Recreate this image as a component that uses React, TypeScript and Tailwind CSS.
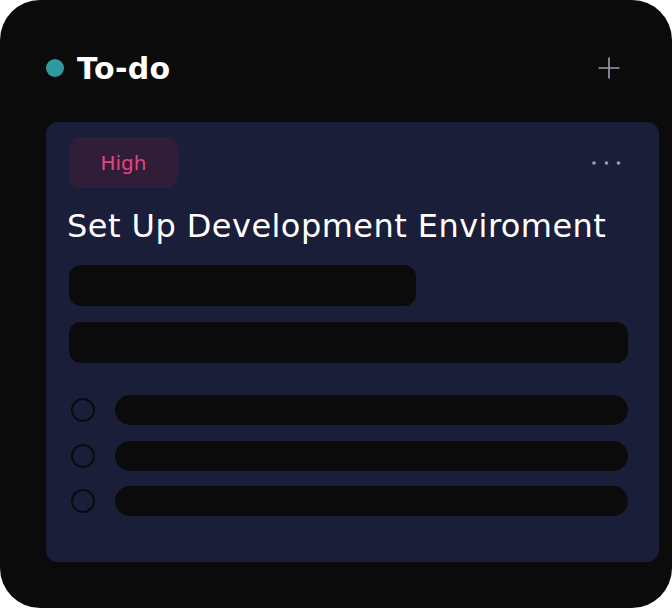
const checklist = [0, 1, 2];

function ChecklistRow() {
  return (
    <div className="flex items-center">
      <div className="ml-[2px] size-[24px] shrink-0 rounded-full border-2 border-[#0b0b0c]"/>
      <div className="ml-[20px] h-[30px] flex-1 rounded-full bg-[#0b0b0c]"/>
    </div>
  );
}

function Dots() {
  return (
    <svg width="32" height="8" viewBox="0 0 32 8" className="text-[#9d9dab]">
      <circle cx="4" cy="4" r="1.8" fill="currentColor"/>
      <circle cx="16.5" cy="4" r="1.8" fill="currentColor"/>
      <circle cx="28.5" cy="4" r="1.8" fill="currentColor"/>
    </svg>
  );
}

function PlusIcon() {
  return (
    <svg width="24" height="24" viewBox="0 0 24 24" fill="none" stroke="currentColor" strokeWidth="1.7">
      <path d="M1.5 12h21M12 1.5v21"/>
    </svg>
  );
}

export default function App() {
  return (
    <div className="w-[672px] h-[608px] bg-white" style={{fontFamily: '"DejaVu Sans", "Open Sans", sans-serif'}}>
      <div className="w-full h-full rounded-[40px] bg-[#0b0b0c] pl-[46px] pr-[13px] pt-[50px]">
        {/* Column header */}
        <div className="flex items-center h-9">
          <span className="size-[18px] rounded-full bg-[#2f9b9f]"/>
          <h2 className="ml-[13px] text-[30px] font-bold text-white tracking-[0.4px]">To-do</h2>
          <button className="ml-auto mr-[38px] text-[#9a9aa8]">
            <PlusIcon/>
          </button>
        </div>

        {/* Task card */}
        <div className="mt-[36px] rounded-[12px] bg-[#1b1e38] pl-[23px] pr-[31px] pt-[15px] pb-[46px]">
          <div className="flex items-center justify-between">
            <span className="flex items-center justify-center w-[109px] h-[51px] rounded-[10px] bg-[#301d38] text-[20px] text-[#e8437c]">
              High
            </span>
            <span className="mr-[6px]"><Dots/></span>
          </div>
          <h3 className="mt-[18px] text-[32px] leading-[40px] tracking-[0.45px] text-white -ml-[2px]">
            Set Up Development Enviroment
          </h3>
          <div className="mt-[19px] h-[41px] w-[347px] rounded-[12px] bg-[#0b0b0c]"/>
          <div className="mt-[16px] h-[41px] rounded-[12px] bg-[#0b0b0c]"/>
          <div className="mt-[32px] flex flex-col gap-[15.5px]">
            {checklist.map((i) => (
              <ChecklistRow key={i}/>
            ))}
          </div>
        </div>
      </div>
    </div>
  );
}
